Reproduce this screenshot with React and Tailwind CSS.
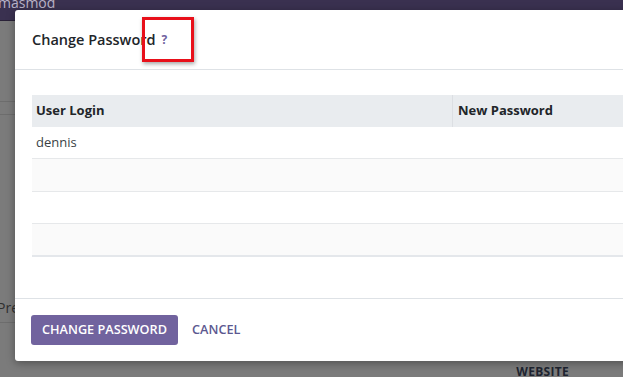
import { useState } from 'react';

const rows = [{ login: 'dennis' }, { login: '' }, { login: '' }, { login: '' }];

export default function App() {
    const [open] = useState(true);

    return (
        <div className="relative w-[623px] h-[377px] overflow-hidden bg-[#7b7b7b]" style={{ fontFamily: '"Open Sans", "Noto Sans", sans-serif' }}>
            {/* Page behind the dialog, dimmed */}
            <div className="h-[27px] bg-[#3a3150] border-b border-[#2a2238] text-[#b9b3c8] text-[14px] leading-[18px] -mt-[6px] pl-0">
                <span className="-ml-[2px]">masmod</span>
            </div>
            <div className="h-[80px]" />
            <div className="border-t border-[#6d6d6d] h-[13px]" />
            <div className="border-t border-[#6d6d6d] h-[186px]" />
            <div className="text-[14px] text-[#2f2f2f] -ml-[3px] leading-[16px]">Pre</div>
            <div className="border-t border-[#6d6d6d] mt-[6px]" />
            <div className="flex justify-end pr-[54px] pt-[40px]">
                <span className="text-[12px] font-bold text-[#1e2430] tracking-wide">WEBSITE</span>
            </div>

            {open && (
                <div className="absolute left-[15px] top-[10px] w-[760px] h-[351px] bg-white rounded-[3px] shadow-[0_2px_8px_rgba(0,0,0,0.35)] flex flex-col">
                    {/* Header */}
                    <div className="h-[60px] border-b border-[#dee2e6] flex items-center pl-[17px]">
                        <h4 className="text-[14.5px] font-semibold text-[#212529]">Change Password</h4>
                        <span className="ml-[6px] text-[12px] font-bold text-[#6f61a0]">?</span>
                    </div>

                    {/* Body */}
                    <div className="flex-1 pt-[25px] pl-[17px]">
                        <div className="border-b-2 border-[#e4e7eb]">
                            <div className="flex h-[32px] bg-[#e9ecef] text-[13px] font-bold text-[#212529]">
                                <div className="w-[421px] border-r border-[#dcdfe3] flex items-center pl-[4px]">User Login</div>
                                <div className="flex-1 flex items-center pl-[5px]">New Password</div>
                            </div>
                            {rows.map((row, i) => (
                                <div
                                    key={i}
                                    className={`flex items-center pl-[4px] text-[13px] text-[#3a3f45] ${i < rows.length - 1 ? 'h-[32.3px] border-b border-[#e6e8ea]' : 'h-[31px]'} ${i % 2 === 1 ? 'bg-[#fafafa]' : 'bg-white'}`}
                                >
                                    {row.login}
                                </div>
                            ))}
                        </div>
                    </div>

                    {/* Footer */}
                    <div className="h-[63px] border-t border-[#dee2e6] flex items-center gap-[14px] pl-[16px]">
                        <button type="button" className="h-[30px] px-[11px] rounded-[3px] bg-[#71639e] text-white text-[12.7px] font-semibold uppercase">
                            Change Password
                        </button>
                        <button type="button" className="text-[12.7px] font-semibold uppercase text-[#5c5890]">
                            Cancel
                        </button>
                    </div>
                </div>
            )}

            {/* Red annotation box */}
            <div className="absolute left-[142px] top-[17px] w-[52px] h-[45px] border-[3px] border-[#e8101a] shadow-[1px_2px_4px_rgba(0,0,0,0.35)]" />
        </div>
    );
}
